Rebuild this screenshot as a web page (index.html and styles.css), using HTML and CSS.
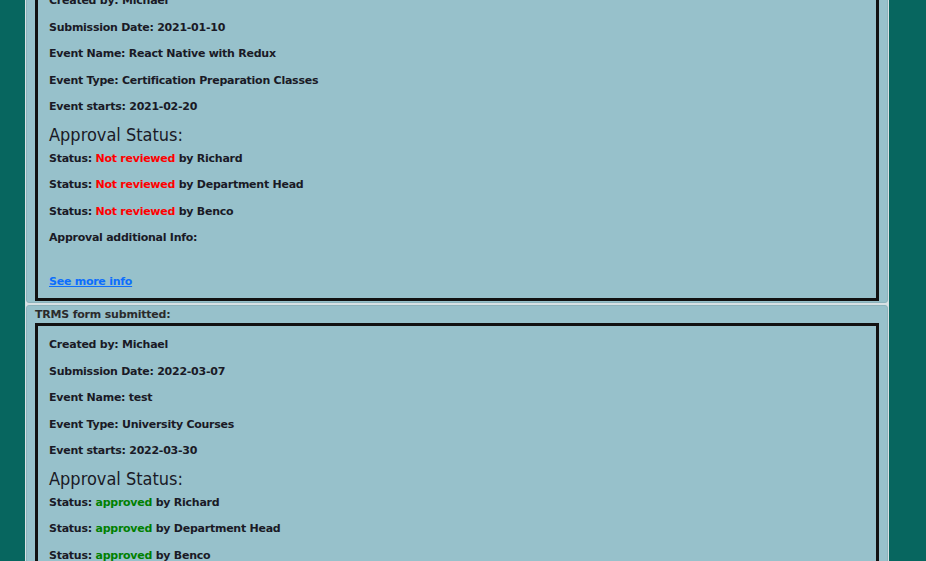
FILE: index.html
```html
<!DOCTYPE html>
<html>
<head>
<meta charset="utf-8">
<link rel="stylesheet" href="styles.css">
</head>
<body>
<div class="page">
  <ul class="list">
    <li class="item">
      <div class="label">TRMS form submitted:</div>
      <div class="box">
        <p>Created by: Michael</p>
        <p>Submission Date: 2021-01-10</p>
        <p>Event Name: React Native with Redux</p>
        <p>Event Type: Certification Preparation Classes</p>
        <p>Event starts: 2021-02-20</p>
        <h3 class="heading">Approval Status:</h3>
        <p class="first">Status: <span class="red">Not reviewed</span> by Richard</p>
        <p>Status: <span class="red">Not reviewed</span> by Department Head</p>
        <p>Status: <span class="red">Not reviewed</span> by Benco</p>
        <p>Approval additional Info: </p>
        <p class="more"><a href="#">See more info</a></p>
      </div>
    </li>
    <li class="item">
      <div class="label">TRMS form submitted:</div>
      <div class="box">
        <p>Created by: Michael</p>
        <p>Submission Date: 2022-03-07</p>
        <p>Event Name: test</p>
        <p>Event Type: University Courses</p>
        <p>Event starts: 2022-03-30</p>
        <h3 class="heading">Approval Status:</h3>
        <p class="first">Status: <span class="green">approved</span> by Richard</p>
        <p>Status: <span class="green">approved</span> by Department Head</p>
        <p>Status: <span class="green">approved</span> by Benco</p>
        <p>Approval additional Info: </p>
        <p class="more"><a href="#">See more info</a></p>
      </div>
    </li>
  </ul>
</div>
</body>
</html>
```

FILE: styles.css
```css
html, body {
  margin: 0;
  padding: 0;
  background: #07665f;
  font-family: "DejaVu Sans", Verdana, sans-serif;
  color: #1a1a26;
}
.page {
  margin-top: -40px;
}
.list {
  list-style: none;
  margin: 0 37px 0 25px;
  padding: 0;
  border: 1px solid #d7e1e4;
  background: #d7e1e4;
  display: flex;
  flex-direction: column;
  gap: 2px;
}
.item {
  background: #97c1cb;
  border: 1px solid #8cb3bc;
  border-radius: 3px;
  padding: 2px 8px 1px 8px;
}
.label {
  font-size: 11px;
  font-weight: bold;
  line-height: 13px;
  color: #2b2b2b;
  margin-bottom: 2px;
  letter-spacing: -0.2px;
}
.box {
  border: 3px solid #111;
  padding: 0 11px;
}
.box p {
  font-size: 11px;
  font-weight: bold;
  line-height: 14.5px;
  margin: 12px 0;
  letter-spacing: -0.25px;
}
.box p.first {
  margin-top: 9px;
}
.heading {
  font-size: 18px;
  font-stretch: condensed;
  font-weight: normal;
  line-height: 16px;
  margin: 12px 0 0 0;
  color: #1a1a26;
}
.red { color: #ff0000; }
.green { color: #008000; }
.box p.more {
  margin-top: 29px;
  margin-bottom: 9px;
}
.more a {
  color: #0d6efd;
  text-decoration: underline;
}
```
